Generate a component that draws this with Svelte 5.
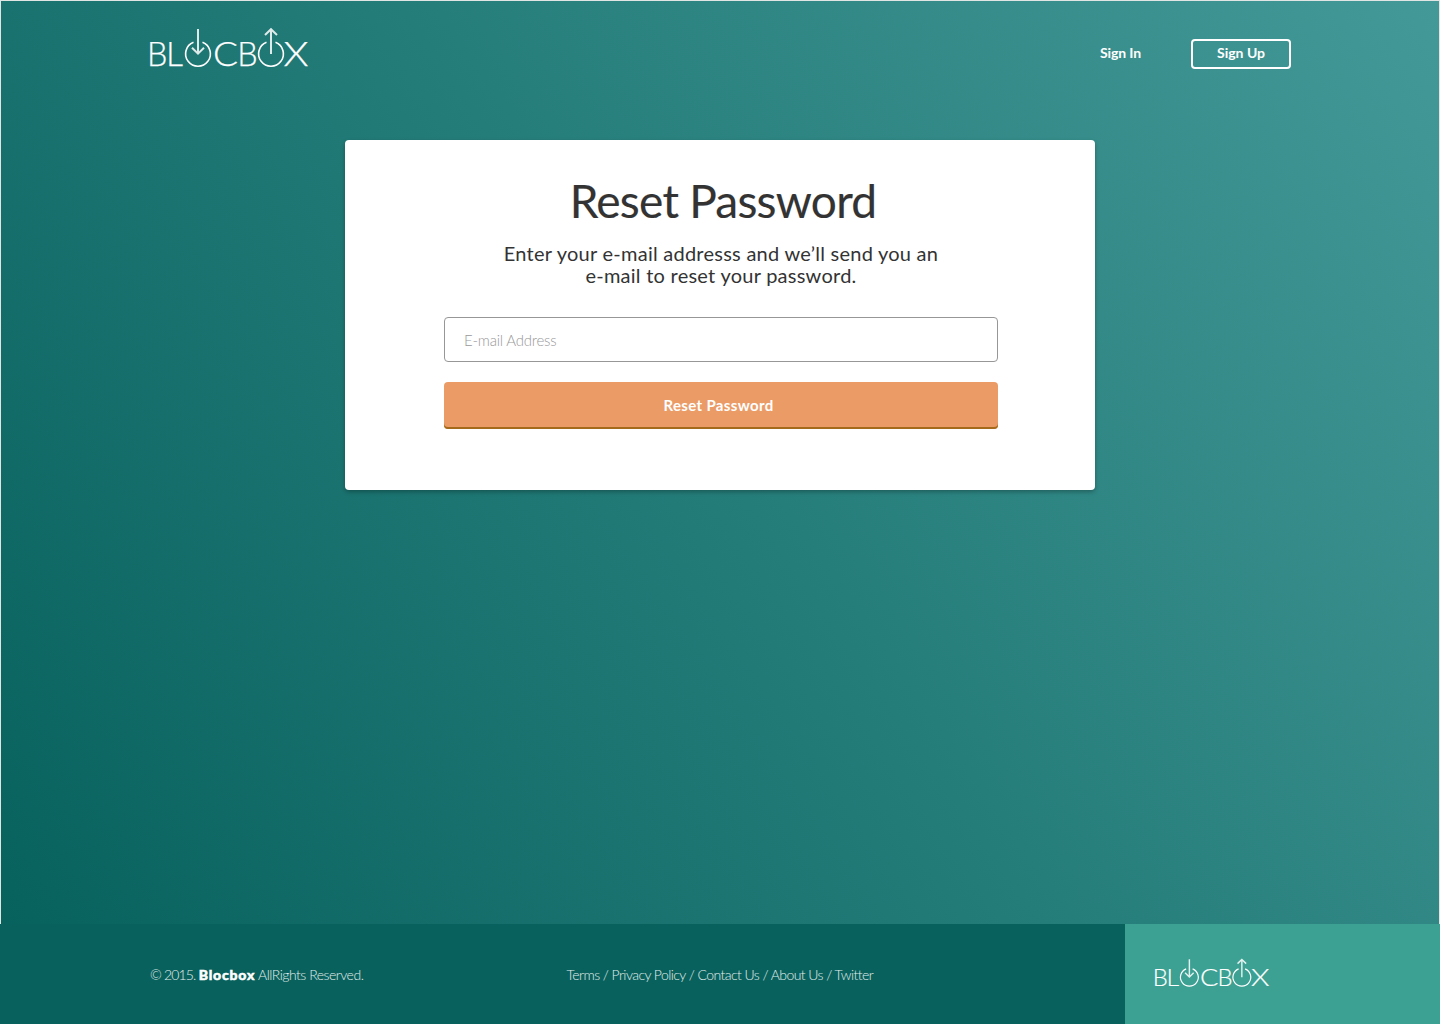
<script lang="ts">
  const links = ['Terms', 'Privacy Policy', 'Contact Us', 'About Us', 'Twitter'];
  const letters = [
    { char: 'B', x: -3, width: 20.4 },
    { char: 'L', x: 16, width: 17 },
    { char: 'C', x: 62.9, width: 25 },
    { char: 'B', x: 87.2, width: 20.4 },
    { char: 'X', x: 133.6, width: 25 }
  ];
  let email = $state('');
</script>

{#snippet logo(size: string)}
  <svg class="logo {size}" viewBox="-4 -4 168 56" role="img" aria-label="Blocbox">
    {#each letters as letter}
      <text x={letter.x} y="38.9" textLength={letter.width} lengthAdjust="spacingAndGlyphs">{letter.char}</text>
    {/each}
    <path d="M43.5 15.3A12.4 12.4 0 1 0 52.5 15.3" />
    <path d="M116.5 15.3A12.4 12.4 0 1 0 125.5 15.3" />
    <path class="arrow" d="M48 2V27M42 20.8L48 26.6L54 20.8" />
    <path class="arrow" d="M121 27V2.5M115 8L121 2.2L127 8" />
  </svg>
{/snippet}

<div class="page">
  <main>
    <header>
      {@render logo('large')}
      <nav>
        <a class="signin" href="#signin">Sign In</a>
        <a class="signup" href="#signup">Sign Up</a>
      </nav>
    </header>

    <section class="card">
      <h1>Reset Password</h1>
      <p>Enter your e-mail addresss and we’ll send you an<br />e-mail to reset your password.</p>
      <form onsubmit={(e) => e.preventDefault()}>
        <input type="email" placeholder="E-mail Address" aria-label="E-mail Address" bind:value={email} />
        <button type="submit">Reset Password</button>
      </form>
    </section>
  </main>

  <footer>
    <div class="copyright"><span class="year">© 2015.</span> <b>Blocbox</b> AllRights Reserved.</div>
    <div class="links">
      {#each links as link, i}{#if i > 0}{' / '}{/if}<a href="#{link}">{link}</a>{/each}
    </div>
    <div class="brand">{@render logo('small')}</div>
  </footer>
</div>

<style>
  :global(body) {
    margin: 0;
  }
  .page {
    display: flex;
    flex-direction: column;
    width: 1440px;
    height: 1024px;
    font-family: Lato, 'Liberation Sans', sans-serif;
    color: #333;
  }
  a {
    color: inherit;
    text-decoration: none;
  }
  main {
    box-sizing: border-box;
    height: 924px;
    border: 1px solid #e1e6e5;
    border-bottom: 0;
    background: linear-gradient(55deg, #07615d, #439997);
  }
  header {
    box-sizing: border-box;
    display: flex;
    align-items: flex-start;
    justify-content: space-between;
    height: 139px;
    padding: 22px 148px 0 145px;
  }
  .logo {
    display: block;
    overflow: visible;
    fill: none;
    stroke: #fff;
    stroke-width: 1.6;
  }
  .logo text {
    fill: #fff;
    stroke-width: 0.25;
    font-family: Lato, sans-serif;
    font-size: 33.8px;
    font-weight: 300;
  }
  .logo .arrow {
    stroke-opacity: 0.85;
    stroke-width: 2;
  }
  .large {
    width: 168px;
    height: 56px;
  }
  .small {
    width: 120.75px;
    height: 40.25px;
  }
  nav {
    display: flex;
    align-items: center;
    gap: 50px;
    padding-top: 16px;
    color: #fff;
    font-size: 14px;
    font-weight: 700;
    line-height: 24px;
  }
  .signin {
    width: 41px;
    height: 26px;
    letter-spacing: -0.12px;
    white-space: nowrap;
  }
  .signup {
    box-sizing: border-box;
    width: 100px;
    height: 30px;
    border: 2px solid #fff;
    border-radius: 4px;
    text-align: center;
  }
  .card {
    box-sizing: border-box;
    width: 750px;
    height: 350px;
    margin: 0 auto;
    padding: 31px 97px 0 99px;
    border-radius: 4px;
    background: #fff;
    box-shadow: 0 2px 4px rgb(0 0 0 / 28%);
    text-align: center;
  }
  h1 {
    margin: 0;
    padding-left: 4px;
    font-size: 46px;
    font-weight: 400;
    letter-spacing: -0.75px;
    line-height: 60px;
    white-space: nowrap;
    -webkit-text-stroke: 0.15px #333;
  }
  p {
    margin: 11px 0 0;
    font-size: 20px;
    letter-spacing: 0.25px;
    line-height: 22px;
    white-space: nowrap;
  }
  form {
    display: flex;
    flex-direction: column;
    gap: 20px;
    margin-top: 31px;
  }
  input {
    box-sizing: border-box;
    width: 554px;
    height: 45px;
    padding: 0 19px;
    border: 1px solid #979797;
    border-radius: 4px;
    outline: 0;
    background: #fff;
    font: 300 15px Lato, sans-serif;
    letter-spacing: -0.22px;
  }
  input::placeholder {
    color: #999;
    opacity: 1;
  }
  button {
    width: 554px;
    height: 47px;
    padding: 0 5px 2px 0;
    border: 0;
    border-radius: 4px;
    background: #eb9b66;
    box-shadow: inset 0 -2px 0 #a56a1a;
    color: #fff;
    font: 700 15px Lato, sans-serif;
    letter-spacing: 0.35px;
  }
  footer {
    display: grid;
    grid-template-columns: 417px 708px 315px;
    height: 100px;
    background: #09615d;
    color: #e0eeec;
    font-size: 14px;
    font-weight: 300;
    letter-spacing: -0.56px;
    line-height: 102px;
    white-space: nowrap;
  }
  .copyright {
    padding-left: 150px;
    letter-spacing: -0.49px;
  }
  .year {
    letter-spacing: -0.84px;
  }
  .copyright b {
    color: #fff;
    font-weight: 900;
    letter-spacing: 0.8px;
    -webkit-text-stroke: 0.5px #fff;
  }
  .links {
    padding-left: 149.5px;
  }
  .brand {
    display: flex;
    align-items: flex-start;
    box-sizing: border-box;
    padding: 31px 0 0 27.4px;
    background: #3ca193;
  }
</style>
